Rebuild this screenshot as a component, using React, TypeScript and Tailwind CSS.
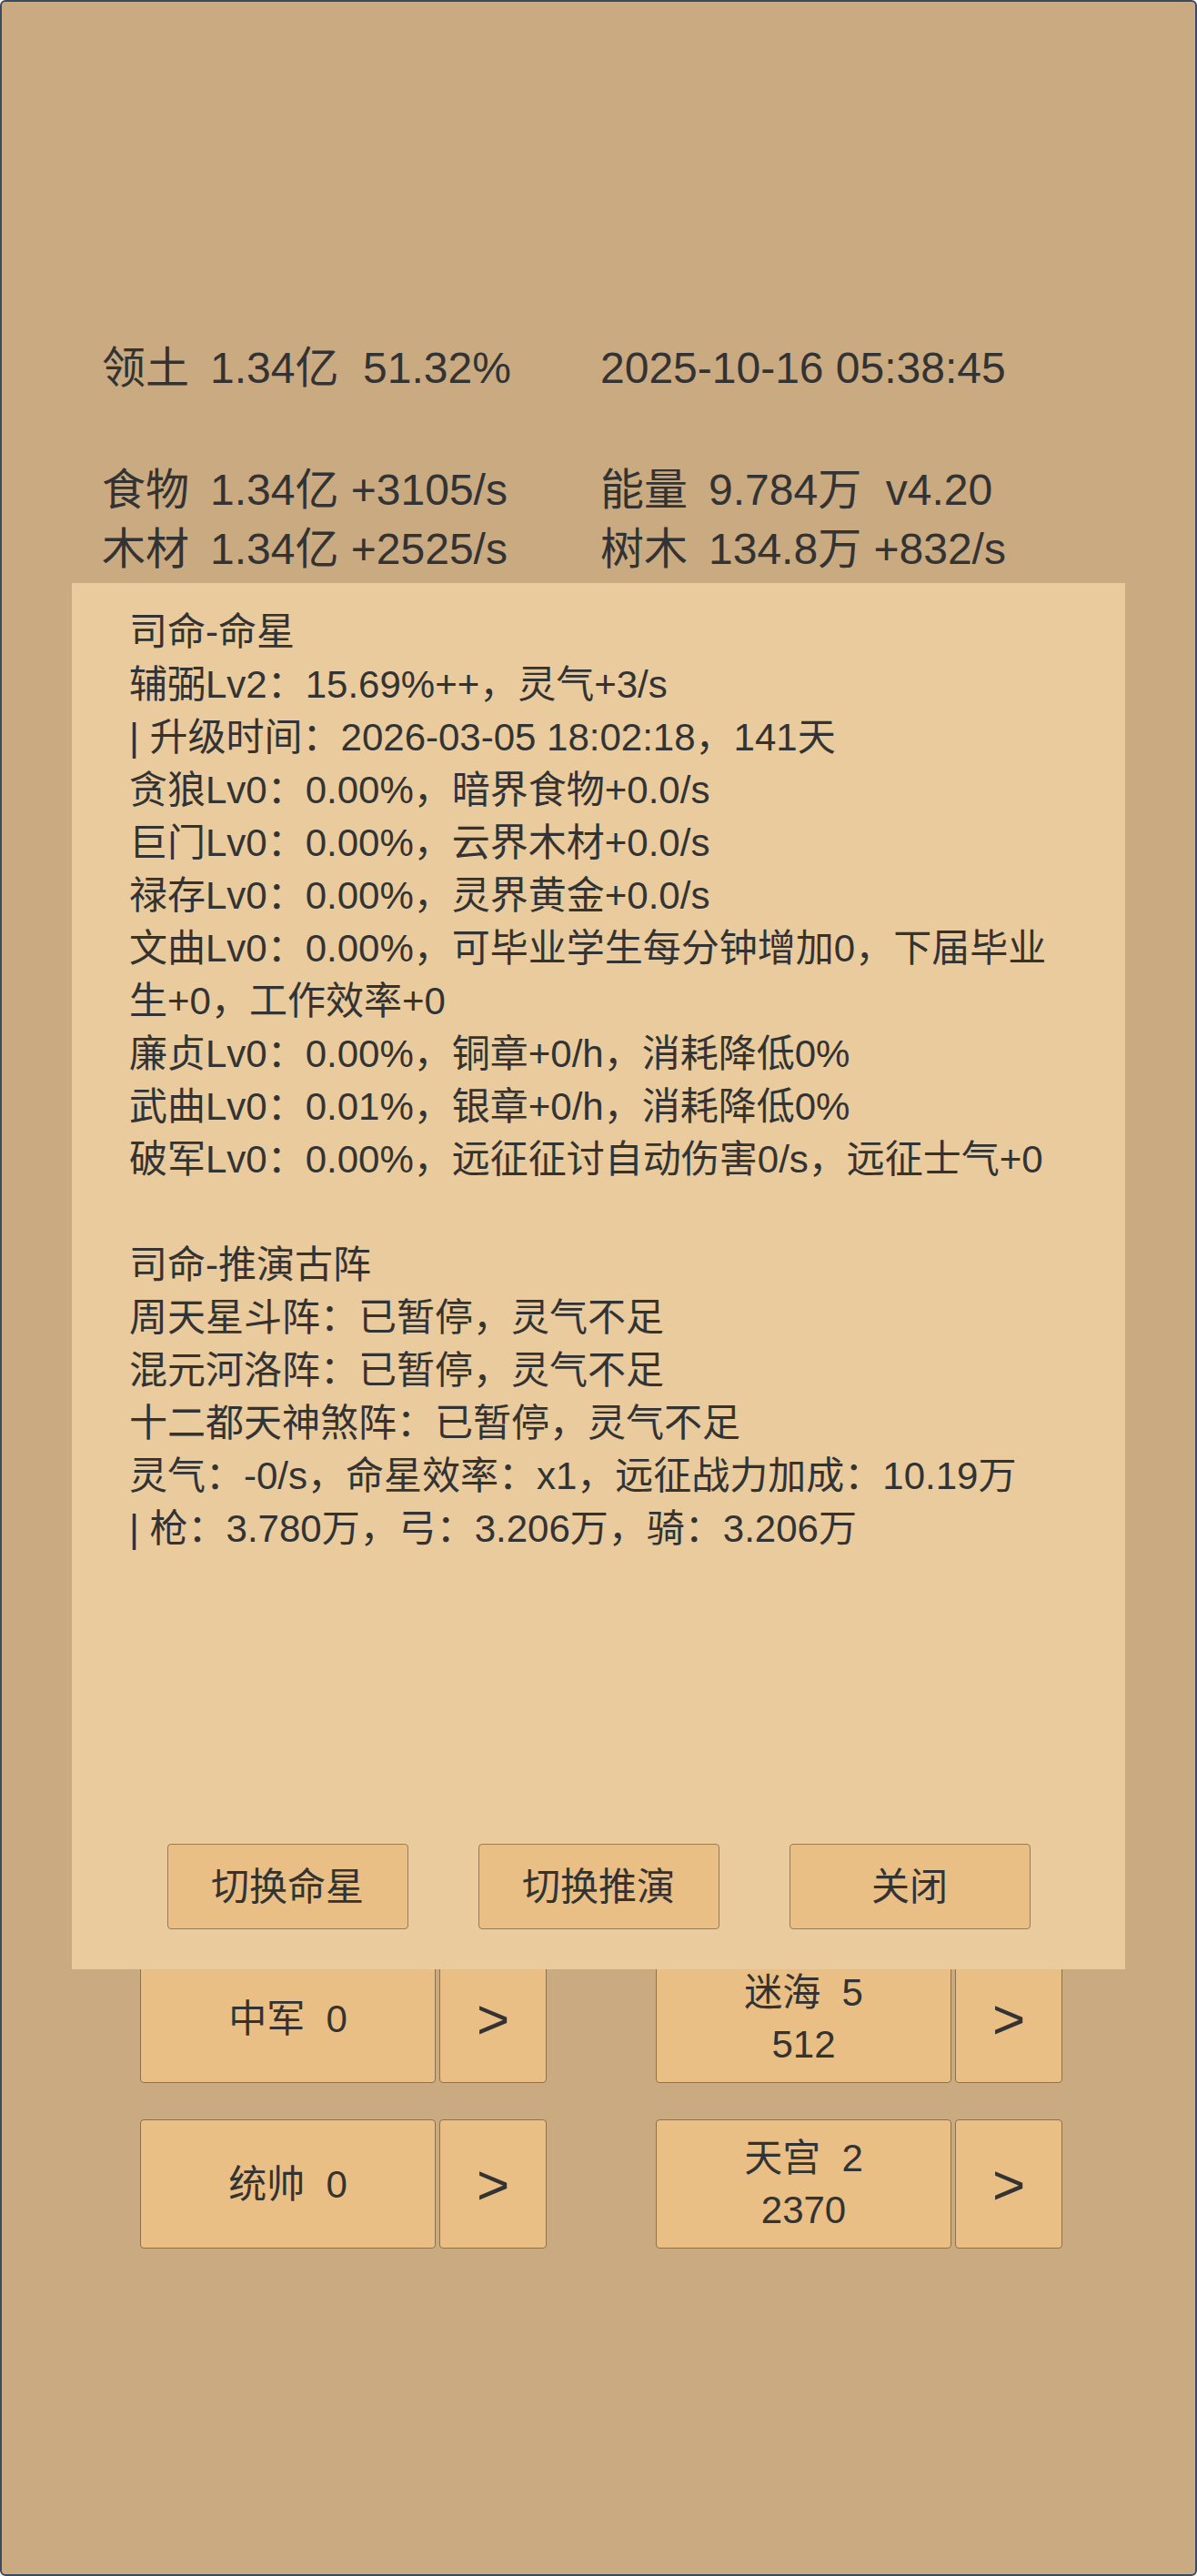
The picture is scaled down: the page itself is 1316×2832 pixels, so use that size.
import React from "react";

const FONT = { fontFamily: '"Liberation Sans", "Noto Sans CJK SC", sans-serif' };

function BigButton({ lines }: { lines: string[] }) {
  return (
    <div className="flex gap-[4px]">
      <div className="w-[325px] h-[142px] flex flex-col items-center justify-center rounded-[4px] border border-[#8f7049] bg-[#e9bf85] text-[42px] leading-[57px] text-[#333333] whitespace-pre">
        {lines.map((l, i) => (
          <div key={i}>{l}</div>
        ))}
      </div>
      <div className="w-[118px] h-[142px] flex items-center justify-center rounded-[4px] border border-[#8f7049] bg-[#e9bf85] text-[62px] text-[#333333]">
        &gt;
      </div>
    </div>
  );
}

function Stat({ label, rest }: { label: string; rest: string }) {
  return (
    <div>
      <span className="mr-[23px]">{label}</span>
      {rest}
    </div>
  );
}

const starLines = [
  "司命-命星",
  "辅弼Lv2：15.69%++，灵气+3/s",
  "| 升级时间：2026-03-05 18:02:18，141天",
  "贪狼Lv0：0.00%，暗界食物+0.0/s",
  "巨门Lv0：0.00%，云界木材+0.0/s",
  "禄存Lv0：0.00%，灵界黄金+0.0/s",
  "文曲Lv0：0.00%，可毕业学生每分钟增加0，下届毕业生+0，工作效率+0",
  "廉贞Lv0：0.00%，铜章+0/h，消耗降低0%",
  "武曲Lv0：0.01%，银章+0/h，消耗降低0%",
  "破军Lv0：0.00%，远征征讨自动伤害0/s，远征士气+0",
  "\u00a0",
  "司命-推演古阵",
  "周天星斗阵：已暂停，灵气不足",
  "混元河洛阵：已暂停，灵气不足",
  "十二都天神煞阵：已暂停，灵气不足",
  "灵气：-0/s，命星效率：x1，远征战力加成：10.19万",
  "| 枪：3.780万，弓：3.206万，骑：3.206万",
];

export default function App() {
  return (
    <div
      style={FONT}
      className="relative w-[1316px] h-[2832px] overflow-hidden rounded-[6px] border-2 border-[#3b4a63] bg-[#caaa81] text-[#333333]"
    >
      {/* header stats */}
      <div className="pt-[370px] pl-[110px] text-[48px] leading-[65px] whitespace-pre">
        <div className="grid grid-cols-[548px_1fr]">
          <Stat label="领土" rest="1.34亿  51.32%" />
          <div>2025-10-16 05:38:45</div>
        </div>
        <div className="mt-[69px] grid grid-cols-[548px_1fr]">
          <Stat label="食物" rest="1.34亿 +3105/s" />
          <Stat label="能量" rest="9.784万  v4.20" />
          <Stat label="木材" rest="1.34亿 +2525/s" />
          <Stat label="树木" rest="134.8万 +832/s" />
        </div>
      </div>

      {/* building buttons */}
      <div className="mt-[1512px] pl-[152px] flex flex-col gap-[40px]">
        <div className="flex gap-[120px]">
          <BigButton lines={["中军  0"]} />
          <BigButton lines={["迷海  5", "512"]} />
        </div>
        <div className="flex gap-[120px]">
          <BigButton lines={["统帅  0"]} />
          <BigButton lines={["天宫  2", "2370"]} />
        </div>
      </div>

      {/* modal panel */}
      <div className="absolute left-[77px] top-[639px] w-[1158px] h-[1524px] bg-[#e9cb9d] flex flex-col">
        <div className="flex-1 pt-[25px] pl-[63px] pr-[63px] text-[42px] leading-[58px]">
          {starLines.map((l, i) => (
            <div key={i}>{l}</div>
          ))}
        </div>
        <div className="flex justify-center gap-[77px] pb-[44px]">
          {["切换命星", "切换推演", "关闭"].map((t) => (
            <div
              key={t}
              className="w-[265px] h-[94px] flex items-center justify-center rounded-[4px] border border-[#9a7b53] bg-[#e9bf85] text-[42px] text-[#333333]"
            >
              {t}
            </div>
          ))}
        </div>
      </div>
    </div>
  );
}
